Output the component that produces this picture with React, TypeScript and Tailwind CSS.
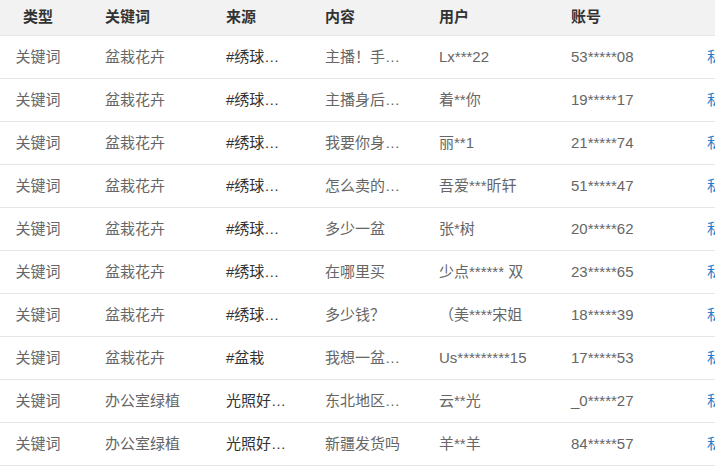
import React from "react";

const rows = [
  ["关键词", "盆栽花卉", "#绣球…", "主播！手…", "Lx***22", "53*****08"],
  ["关键词", "盆栽花卉", "#绣球…", "主播身后…", "着**你", "19*****17"],
  ["关键词", "盆栽花卉", "#绣球…", "我要你身…", "丽**1", "21*****74"],
  ["关键词", "盆栽花卉", "#绣球…", "怎么卖的…", "吾爱***昕轩", "51*****47"],
  ["关键词", "盆栽花卉", "#绣球…", "多少一盆", "张*树", "20*****62"],
  ["关键词", "盆栽花卉", "#绣球…", "在哪里买", "少点****** 双", "23*****65"],
  ["关键词", "盆栽花卉", "#绣球…", "多少钱？", "（美****宋姐", "18*****39"],
  ["关键词", "盆栽花卉", "#盆栽", "我想一盆…", "Us*********15", "17*****53"],
  ["关键词", "办公室绿植", "光照好…", "东北地区…", "云**光", "_0*****27"],
  ["关键词", "办公室绿植", "光照好…", "新疆发货吗", "羊**羊", "84*****57"],
];

const font = {
  fontFamily: '"Liberation Sans", "Noto Sans CJK SC", sans-serif',
};

export default function App() {
  return (
    <div
      className="w-[715px] h-[467px] overflow-hidden bg-white text-[15px]"
      style={font}
    >
      <div className="w-[800px]">
        <div className="flex items-center h-[36px] bg-[#f2f2f2] border-b border-[#e6e6e6] text-[#333] font-bold">
          <div className="w-[76px] text-center">类型</div>
          <div className="w-[150px] pl-[29px]">关键词</div>
          <div className="w-[99px]">来源</div>
          <div className="w-[114px]">内容</div>
          <div className="w-[132px]">用户</div>
          <div className="w-[136px]">账号</div>
          <div className="flex-1"></div>
        </div>
        {rows.map((r, i) => (
          <div
            key={i}
            className="flex items-center h-[43px] border-b border-[#e6e6e6] text-[#666]"
          >
            <div className="w-[76px] text-center">{r[0]}</div>
            <div className="w-[150px] pl-[29px]">{r[1]}</div>
            <div className="w-[99px] text-[#333]">{r[2]}</div>
            <div className="w-[114px]">{r[3]}</div>
            <div className="w-[132px] whitespace-pre">{r[4]}</div>
            <div className="w-[136px]">{r[5]}</div>
            <div className="flex-1 text-[#1e7fd0]">私信</div>
          </div>
        ))}
      </div>
    </div>
  );
}
